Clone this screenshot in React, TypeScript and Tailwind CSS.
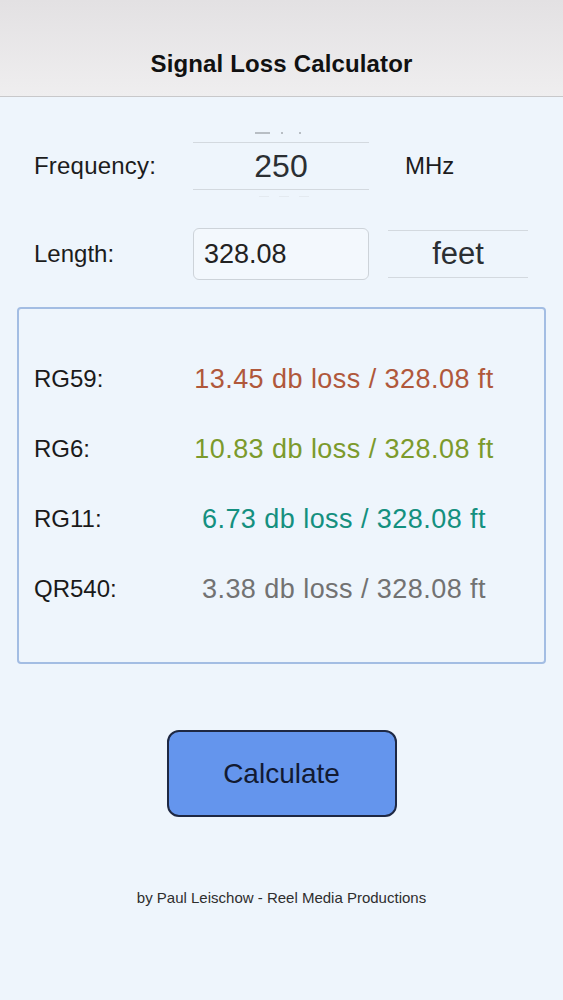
import React from 'react';

// Resultados por tipo de cabo
interface CableResult {
  name: string;
  loss: string;
  color: string;
}

const results: CableResult[] = [
  { name: 'RG59:', loss: '13.45', color: 'text-[#b0583b]' },
  { name: 'RG6:', loss: '10.83', color: 'text-[#7c9a2c]' },
  { name: 'RG11:', loss: '6.73', color: 'text-[#14907f]' },
  { name: 'QR540:', loss: '3.38', color: 'text-[#727272]' },
];

const length = '328.08';

const PickerLines: React.FC<{ className?: string; children: React.ReactNode }> = ({ className, children }) => (
  <div className={`relative h-[48px] border-y border-[#d3d9df] flex items-center justify-center ${className ?? ''}`}>
    {children}
  </div>
);

export default function App() {
  return (
    <div
      className="w-[563px] h-[1000px] bg-[#eef5fc] flex flex-col text-[#1c1c1c]"
      style={{ fontFamily: '"Liberation Sans", Arial, sans-serif' }}
    >
      {/* Barra de título */}
      <div className="h-[97px] bg-gradient-to-b from-[#e3e1e3] to-[#efeeef] border-b border-[#c8c8ca] flex items-end justify-center pb-[14px]">
        <h1 className="text-[24px] font-semibold text-[#111] tracking-[0.15px]">Signal Loss Calculator</h1>
      </div>

      {/* Frequência */}
      <div className="flex items-center mt-[45px] h-[48px]">
        <span className="w-[193px] pl-[34px] text-[24px] tracking-[0.2px]">Frequency:</span>
        <PickerLines className="w-[176px]">
          <div className="absolute -top-[11px] left-[62px] flex items-center">
            <div className="w-[15px] h-[2px] bg-[#b8bec4]" />
            <div className="ml-[11px] w-[2px] h-[2px] bg-[#b8bec4]" />
            <div className="ml-[16px] w-[2px] h-[2px] bg-[#b8bec4]" />
          </div>
          <div className="absolute -bottom-[8px] left-[66px] flex items-center gap-[10px]">
            <div className="w-[10px] h-[1px] bg-[#e4eaf0]" />
            <div className="w-[10px] h-[1px] bg-[#e4eaf0]" />
            <div className="w-[10px] h-[1px] bg-[#e4eaf0]" />
          </div>
          <span className="text-[32px] text-[#2b2f33]">250</span>
        </PickerLines>
        <span className="ml-[36px] text-[24px]">MHz</span>
      </div>

      {/* Comprimento */}
      <div className="flex items-center mt-[38px] h-[52px]">
        <span className="w-[193px] pl-[34px] text-[24px]">Length:</span>
        <div className="w-[176px] h-[52px] rounded-[6px] border border-[#cdd3d9] bg-[#f3f8fd] flex items-center pl-[10px]">
          <span className="text-[27px] text-[#222]">{length}</span>
        </div>
        <PickerLines className="w-[140px] ml-[19px] h-[48px]">
          <span className="text-[31px] text-[#2b2f33]">feet</span>
        </PickerLines>
      </div>

      {/* Caixa de resultados */}
      <div className="mx-[17px] mt-[27px] h-[357px] rounded-[4px] border-2 border-[#a3bde3] flex flex-col justify-center gap-[34px] pb-[3px]">
        {results.map((r) => (
          <div key={r.name} className="flex items-center h-[36px]">
            <span className="w-[160px] pl-[15px] text-[24px] text-[#1a1a1a]">{r.name}</span>
            <span className={`w-[330px] text-center text-[27px] tracking-[0.45px] ${r.color}`}>
              {r.loss} db loss / {length} ft
            </span>
          </div>
        ))}
      </div>

      {/* Botão */}
      <div className="flex justify-center mt-[66px]">
        <button className="w-[230px] h-[87px] rounded-[12px] bg-[#6495ed] border-2 border-[#1e2843] text-[28px] text-[#121a32]">
          Calculate
        </button>
      </div>

      <p className="mt-[70px] text-center text-[15px] text-[#2e2e2e]">
        by Paul Leischow - Reel Media Productions
      </p>
    </div>
  );
}
